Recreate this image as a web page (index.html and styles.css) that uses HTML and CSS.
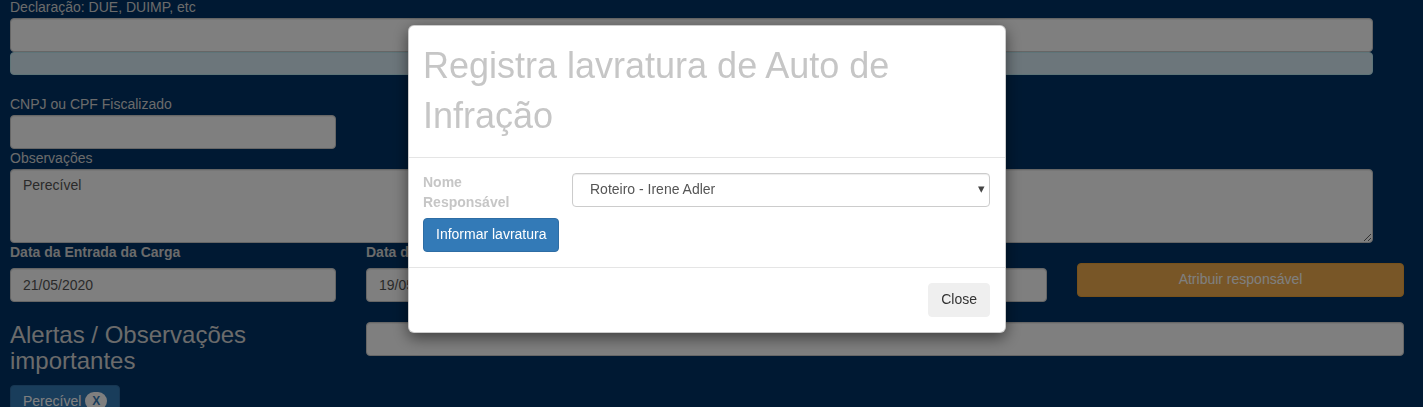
FILE: index.html
```html
<!DOCTYPE html>
<html lang="pt-BR">
<head>
<meta charset="utf-8">
<title>Registra lavratura de Auto de Infração</title>
<link rel="stylesheet" href="styles.css">
</head>
<body>
<div class="page">
  <div class="field wide">
    <label class="lbl">Declaração: DUE, DUIMP, etc</label>
    <input class="form-control" type="text">
    <div class="suggest-bar"></div>
  </div>

  <div class="field narrow spaced">
    <label class="lbl">CNPJ ou CPF Fiscalizado</label>
    <input class="form-control" type="text">
  </div>

  <div class="field wide">
    <label class="lbl">Observações</label>
    <textarea class="form-control area">Perecível</textarea>
  </div>

  <div class="grid-row">
    <div class="col">
      <label class="lbl-bold">Data da Entrada da Carga</label>
      <input class="form-control" type="text" value="21/05/2020">
    </div>
    <div class="col">
      <label class="lbl-bold">Data do Registro da Carga</label>
      <input class="form-control" type="text" value="19/05/2020">
    </div>
    <div class="col">
      <button class="btn btn-warning btn-block push">Atribuir responsável</button>
    </div>
  </div>

  <div class="grid-row alerts-row">
    <h3 class="alerts-title">Alertas / Observações importantes</h3>
    <input class="form-control span-2" type="text">
  </div>

  <button class="btn btn-primary tag">Perecível <span class="badge">X</span></button>
</div>

<div class="backdrop"></div>

<div class="modal">
  <div class="modal-header">
    <h4 class="modal-title">Registra lavratura de Auto de Infração</h4>
  </div>
  <div class="modal-body">
    <div class="label-col">
      <label class="control-label">Nome Responsável</label>
      <button class="btn btn-primary">Informar lavratura</button>
    </div>
    <div class="select-col">
      <div class="select-wrap">
        <select class="form-control select">
          <option>Roteiro - Irene Adler</option>
        </select>
      </div>
    </div>
  </div>
  <div class="modal-footer">
    <button class="btn btn-default">Close</button>
  </div>
</div>
</body>
</html>
```

FILE: styles.css
```css
* { box-sizing: border-box; }

html, body {
  margin: 0;
  padding: 0;
  height: 100%;
  overflow: hidden;
}

body {
  background: #003366;
  font-family: "Liberation Sans", Arial, Helvetica, sans-serif;
  font-size: 14px;
  line-height: 1.42857;
  color: #333;
}

.page {
  padding: 0 10px;
  margin-top: -2px;
}

.field { display: flex; flex-direction: column; }
.wide { width: 1363px; }
.narrow { width: 326px; }
.spaced { margin-top: 20px; }

.lbl {
  display: block;
  height: 20px;
  color: #d6d6d6;
  font-weight: normal;
}

.lbl-bold {
  display: block;
  height: 20px;
  margin-bottom: 5px;
  color: #d6d6d6;
  font-weight: bold;
  white-space: nowrap;
  overflow: hidden;
}

.form-control {
  display: block;
  width: 100%;
  height: 34px;
  padding: 6px 12px;
  font-family: inherit;
  font-size: 14px;
  line-height: 1.42857;
  color: #555;
  background: #fff;
  border: 1px solid #ccc;
  border-radius: 4px;
  box-shadow: inset 0 1px 1px rgba(0,0,0,.075);
  margin: 0;
}

.area { height: 74px; }

.suggest-bar {
  height: 23px;
  background: #d9edf7;
  border: 1px solid #bce8f1;
  border-radius: 4px;
}

.grid-row {
  display: grid;
  grid-template-columns: 326px 681px 327px;
  column-gap: 30px;
}

.push { margin-top: 20px; }

.alerts-row { margin-top: 20px; }

.alerts-title {
  margin: 0;
  font-size: 24px;
  font-weight: 500;
  line-height: 1.1;
  color: #d6d6d6;
}

.span-2 { grid-column: 2 / 4; }

.btn {
  display: inline-block;
  padding: 6px 12px;
  font-family: inherit;
  font-size: 14px;
  line-height: 1.42857;
  text-align: center;
  white-space: nowrap;
  border: 1px solid transparent;
  border-radius: 4px;
  cursor: pointer;
}

.btn-block { display: block; width: 100%; }

.btn-warning {
  color: #fff;
  background: #f0ad4e;
  border-color: #eea236;
}

.btn-primary {
  color: #fff;
  background: #337ab7;
  border-color: #2e6da4;
}

.btn-default {
  color: #333;
  background: #efefef;
  border-color: #efefef;
}

.tag { margin-top: 10px; }

.badge {
  display: inline-block;
  min-width: 10px;
  padding: 3px 7px;
  font-size: 12px;
  font-weight: bold;
  line-height: 1;
  vertical-align: middle;
  text-align: center;
  border-radius: 10px;
  color: #337ab7;
  background: #fff;
  position: relative;
  top: -1px;
}

.backdrop {
  position: fixed;
  inset: 0;
  background: #000;
  opacity: .5;
  z-index: 1040;
}

.modal {
  position: fixed;
  top: 25px;
  left: 408px;
  width: 598px;
  background: #fff;
  border: 1px solid rgba(0,0,0,.2);
  border-radius: 6px;
  box-shadow: 0 5px 15px rgba(0,0,0,.5);
  z-index: 1050;
}

.modal-header {
  padding: 15px 15px 16px 14px;
  border-bottom: 1px solid #e5e5e5;
}

.modal-title {
  margin: 0;
  font-size: 36px;
  font-weight: 500;
  line-height: 50px;
  color: #c6c6c6;
}

.modal-body {
  padding: 15px 15px 15px 14px;
  display: flex;
}

.label-col {
  width: 149px;
  flex: none;
  display: flex;
  flex-direction: column;
  align-items: flex-start;
}

.control-label {
  display: block;
  max-width: 119px;
  margin-bottom: 5px;
  font-weight: bold;
  color: #c6c6c6;
}

.select-col { flex: 1; }

.select-wrap { position: relative; }

.select {
  appearance: none;
  -webkit-appearance: none;
  padding-left: 17px;
  color: #555;
  border-radius: 4px;
}

.select-wrap::after {
  content: "▾";
  position: absolute;
  right: 5px;
  top: 7px;
  font-size: 13px;
  color: #444;
  pointer-events: none;
}

.modal-footer {
  padding: 15px;
  text-align: right;
  border-top: 1px solid #e5e5e5;
}
```
